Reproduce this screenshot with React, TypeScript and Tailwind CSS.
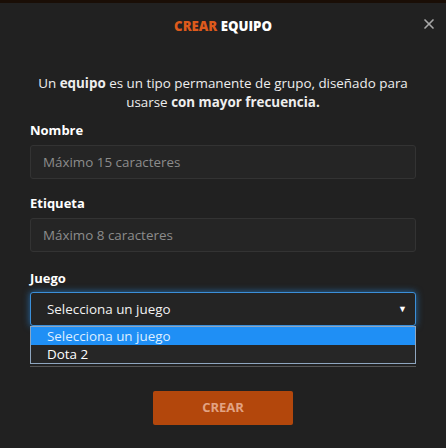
import { X } from 'lucide-react';

const Field = ({ label, placeholder }: { label: string; placeholder: string }) => (
  <div className="flex flex-col">
    <label className="text-[13px] leading-[16px] font-bold text-white">{label}</label>
    <input
      className="mt-[7px] h-[34px] w-full rounded-[3px] border border-[#333333] bg-[#252525] px-[12px] text-[13.4px] text-white outline-none placeholder:text-[#8c8c8c]"
      placeholder={placeholder}
    />
  </div>
);

const App = () => {
  const games = ['Selecciona un juego', 'Dota 2'];

  return (
    <div
      className="h-[448px] w-full overflow-hidden bg-[#212121] text-white"
      style={{ fontFamily: '"Open Sans", "Noto Sans", sans-serif' }}
    >
      <div className="h-[3px] bg-[#1a0e06]" />

      {/* header */}
      <div className="relative pt-[15px] text-center">
        <h1 className="text-[13.2px] leading-[16px] font-extrabold">
          <span className="text-[#dd5a1c]">CREAR</span> <span className="text-white">EQUIPO</span>
        </h1>
        <button className="absolute right-[9px] top-[13px] text-[#a8a8a8]">
          <X size={16} strokeWidth={2.5} />
        </button>
      </div>

      <p className="mx-auto mt-[40px] w-[400px] text-center text-[13.4px] leading-[19px] text-[#eeeeee]">
        Un <b>equipo</b> es un tipo permanente de grupo, diseñado para
        <br />
        usarse <b>con mayor frecuencia.</b>
      </p>

      <div className="mt-[10px] flex flex-col gap-[16px] px-[30px]">
        <Field label="Nombre" placeholder="Máximo 15 caracteres" />
        <Field label="Etiqueta" placeholder="Máximo 8 caracteres" />

        <div className="flex flex-col">
          <label className="mt-[2px] text-[13px] leading-[16px] font-bold text-white">Juego</label>
          <div className="mt-[6px] flex h-[34px] items-center justify-between rounded-[3px] border border-[#3b8fd9] bg-[#242424] pl-[16px] pr-[8px] text-[13.4px] shadow-[0_0_7px_rgba(40,140,230,0.7)]">
            <span className="text-[#f2f2f2]">Selecciona un juego</span>
            <span className="text-[9px] text-white">▼</span>
          </div>
          <div className="border border-[#8fa6bf] bg-[#262626] text-[13.4px] leading-[18px]">
            {games.map((g, i) => (
              <div
                key={g}
                className={i === 0 ? 'bg-[#1f8ff5] pl-[16px] text-[#ddeeff]' : 'pl-[16px] text-white'}
              >
                {g}
              </div>
            ))}
          </div>
          <div className="mt-[2px] h-px bg-[#555555]" />
        </div>
      </div>

      <div className="mt-[24px] flex justify-center">
        <button className="h-[34px] w-[140px] rounded-[2px] bg-[#b3470c] text-[13px] font-bold text-[#e2a383]">
          CREAR
        </button>
      </div>
    </div>
  );
};

export default App;
